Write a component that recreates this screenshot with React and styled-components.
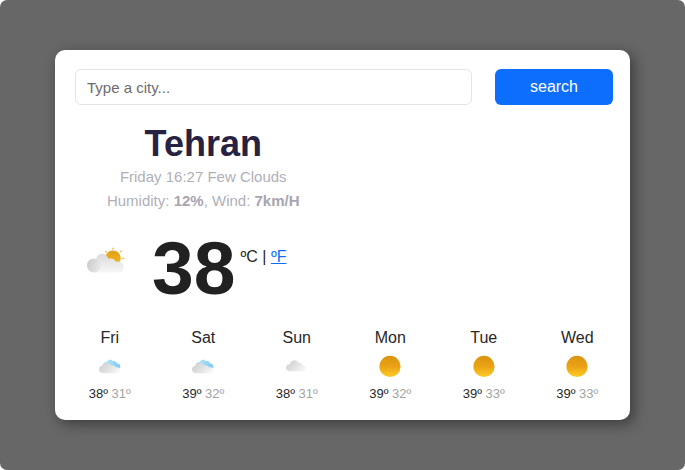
import React, { useState } from "react";
import styled, { createGlobalStyle } from "styled-components";

const GlobalStyle = createGlobalStyle`
  *, *::before, *::after { box-sizing: border-box; }
  body {
    margin: 0;
    background: #fff;
    color: #272727;
    font: 16px/24px "Liberation Sans", Arial, sans-serif;
  }
`;

const Page = styled.main`
  min-height: 100vh;
  padding: 50px 55px;
  border-radius: 7px;
  background: #676767;
`;

const Card = styled.section`
  padding: 19px 6px 16px 8px;
  border-radius: 10px;
  background: #fff;
  box-shadow: 4px 4px 14px rgba(0, 0, 0, 0.42);
`;

const SearchForm = styled.form`
  display: grid;
  grid-template-columns: 1fr 118px;
  gap: 23px;
  margin: 0 11px 0 12px;
`;

const CityInput = styled.input`
  min-width: 0;
  height: 36px;
  padding: 0 11px;
  border: 1px solid #e4e4e6;
  border-radius: 6px;
  background: #fff;
  color: #212121;
  font: inherit;
  font-size: 15px;
  &::placeholder { color: #6c6c6c; opacity: 1; }
`;

const SearchButton = styled.button`
  height: 36px;
  padding: 0;
  border: 0;
  border-radius: 6px;
  background: #0d6efd;
  color: #fff;
  font: inherit;
`;

const Overview = styled.div`
  width: 50%;
  margin-top: 18px;
  text-align: center;
`;

const City = styled.h1`
  margin: 0;
  color: #272142;
  font-size: 36px;
  line-height: 42px;
`;

const Detail = styled.p`
  margin: 0;
  color: #b0afb8;
  font-size: 15px;
  strong { color: #a7a5b1; }
`;

const Current = styled.div`
  display: flex;
  align-items: flex-start;
  margin: 11px 0 0 24px;
`;

const CurrentIcon = styled.svg`
  width: 40px;
  height: 40px;
  margin: 22px 25px 0 0;
`;

const Temperature = styled.strong`
  color: #212121;
  font-size: 75px;
  line-height: 88px;
`;

const Units = styled.span`
  margin: 21px 0 0 5px;
  white-space: pre;
`;

const UnitLink = styled.a`
  color: #0d6efd;
`;

const Forecast = styled.ul`
  display: grid;
  grid-template-columns: repeat(6, 1fr);
  margin: 14px 0 0;
  padding: 0;
  list-style: none;
`;

const Day = styled.li`
  display: flex;
  flex-direction: column;
  align-items: center;
`;

const DayIcon = styled.svg`
  width: 24px;
  height: 24px;
  margin: 4px 0 6px;
`;

const Range = styled.span`
  font-size: 13px;
  line-height: 20px;
`;

const Low = styled.span`
  color: #a3a3a3;
`;

function PartlySunny() {
  return (
    <CurrentIcon viewBox="0 0 40 40" role="img" aria-label="Few clouds">
      <defs>
        <linearGradient id="sunCap" x1="0" y1="0" x2="0" y2="1">
          <stop offset="0" stopColor="#dda018" />
          <stop offset="1" stopColor="#fab91f" />
        </linearGradient>
        <linearGradient id="cloudBody" x1="0" y1="0" x2="0" y2="1">
          <stop offset="0" stopColor="#dbdbdb" />
          <stop offset="1" stopColor="#f7f7f7" />
        </linearGradient>
        <linearGradient id="cloudPuff" x1="0" y1="0.3" x2="1" y2="0.6">
          <stop offset="0" stopColor="#cbcbcb" />
          <stop offset="1" stopColor="#e9e9e9" />
        </linearGradient>
      </defs>
      <g stroke="#efb32d" strokeWidth="1.4" strokeLinecap="round">
        <path d="M26 2.3v.8M18.8 5.6l.4.5M34.3 5.1l-.4.6M35.9 12.4h.8" />
      </g>
      <circle cx="26" cy="12.2" r="7.7" fill="url(#sunCap)" />
      <path d="M7 26.6L8.5 15C9.5 6.5 18.5 5 21.7 13C24.5 11.8 28.1 13.2 28.8 16C32 14.8 36.6 16.2 36.4 21.3C36.2 25.4 34 26.6 31 26.6Z" fill="url(#cloudBody)" />
      <circle cx="7" cy="19.5" r="7" fill="url(#cloudPuff)" />
    </CurrentIcon>
  );
}

function WeatherIcon({ kind, id }) {
  if (kind === "Sunny") {
    return (
      <DayIcon viewBox="0 0 24 24" role="img" aria-label={kind}>
        <defs>
          <linearGradient id={id} x1="0" y1="0" x2="0" y2="1">
            <stop offset="0" stopColor="#d9930f" />
            <stop offset="0.5" stopColor="#e9a315" />
            <stop offset="1" stopColor="#ffcb24" />
          </linearGradient>
        </defs>
        <circle cx="12" cy="12.4" r="10.6" fill={`url(#${id})`} />
        <g fill="#f49b18" opacity="0.55">
          <ellipse cx="7" cy="7" rx="3" ry="1.3" />
          <ellipse cx="18" cy="12" rx="3.5" ry="1.5" />
          <ellipse cx="6.5" cy="16.2" rx="2" ry="0.6" />
        </g>
      </DayIcon>
    );
  }
  const cloudy = kind === "Cloudy";
  return (
    <DayIcon viewBox="0 0 24 24" role="img" aria-label={kind}>
      <defs>
        <linearGradient id={id} x1="0" y1="0.3" x2="1" y2="0.8">
          <stop offset="0" stopColor="#cfcfcf" />
          <stop offset="0.55" stopColor="#e5e5e5" />
          <stop offset="1" stopColor="#fafafa" />
        </linearGradient>
        <linearGradient id={`${id}sky`} x1="0" y1="0" x2="1" y2="0">
          <stop offset="0" stopColor="#c4e8f9" />
          <stop offset="1" stopColor="#79caf7" />
        </linearGradient>
      </defs>
      {cloudy ? (
        <path d="M4.6 17.3C-.2 17 0 10.2 4.9 10.2C6 5.2 12 4.9 13.6 9C15.5 8.4 17.2 9.8 17.8 11.4C22.2 11 22.4 17.3 19.2 17.3Z" fill={`url(#${id})`} />
      ) : (
        <>
          <path d="M4.5 12C4.5 8.8 7 7.6 8.8 7.9C10.3 5.2 13.4 5.4 14.6 7.2C17 6.5 18.6 8 19 9.6C21.5 9.4 22.6 11.4 22.3 14.6L14 15Z" fill={`url(#${id}sky)`} />
          <path d="M4.6 19.2C-.2 18.9 -.2 12 4.8 11.6C6 8 11.5 7.8 13.2 11.4C15.6 10.8 17.4 12 18 13.4C20.5 13 22.2 13.6 22.3 15.4C22.4 17.8 21.6 19.2 19.6 19.2Z" fill={`url(#${id})`} />
        </>
      )}
    </DayIcon>
  );
}

const days = [
  { name: "Fri", kind: "Mostly cloudy", high: 38, low: 31 },
  { name: "Sat", kind: "Mostly cloudy", high: 39, low: 32 },
  { name: "Sun", kind: "Cloudy", high: 38, low: 31 },
  { name: "Mon", kind: "Sunny", high: 39, low: 32 },
  { name: "Tue", kind: "Sunny", high: 39, low: 33 },
  { name: "Wed", kind: "Sunny", high: 39, low: 33 },
];

export default function App() {
  const [query, setQuery] = useState("");
  return (
    <>
      <GlobalStyle />
      <Page>
        <Card>
          <SearchForm onSubmit={(event) => event.preventDefault()}>
            <CityInput
              type="text"
              aria-label="City"
              placeholder="Type a city..."
              value={query}
              onChange={(event) => setQuery(event.target.value)}
            />
            <SearchButton type="submit">search</SearchButton>
          </SearchForm>
          <Overview>
            <City>Tehran</City>
            <Detail>Friday 16:27 Few Clouds</Detail>
            <Detail>
              Humidity: <strong>12%</strong>, Wind: <strong>7km/H</strong>
            </Detail>
          </Overview>
          <Current>
            <PartlySunny />
            <Temperature>38</Temperature>
            <Units>
              ºC | <UnitLink href="#fahrenheit">ºF</UnitLink>
            </Units>
          </Current>
          <Forecast>
            {days.map((day) => (
              <Day key={day.name}>
                <span>{day.name}</span>
                <WeatherIcon kind={day.kind} id={`icon${day.name}`} />
                <Range>
                  {day.high}º <Low>{day.low}º</Low>
                </Range>
              </Day>
            ))}
          </Forecast>
        </Card>
      </Page>
    </>
  );
}
